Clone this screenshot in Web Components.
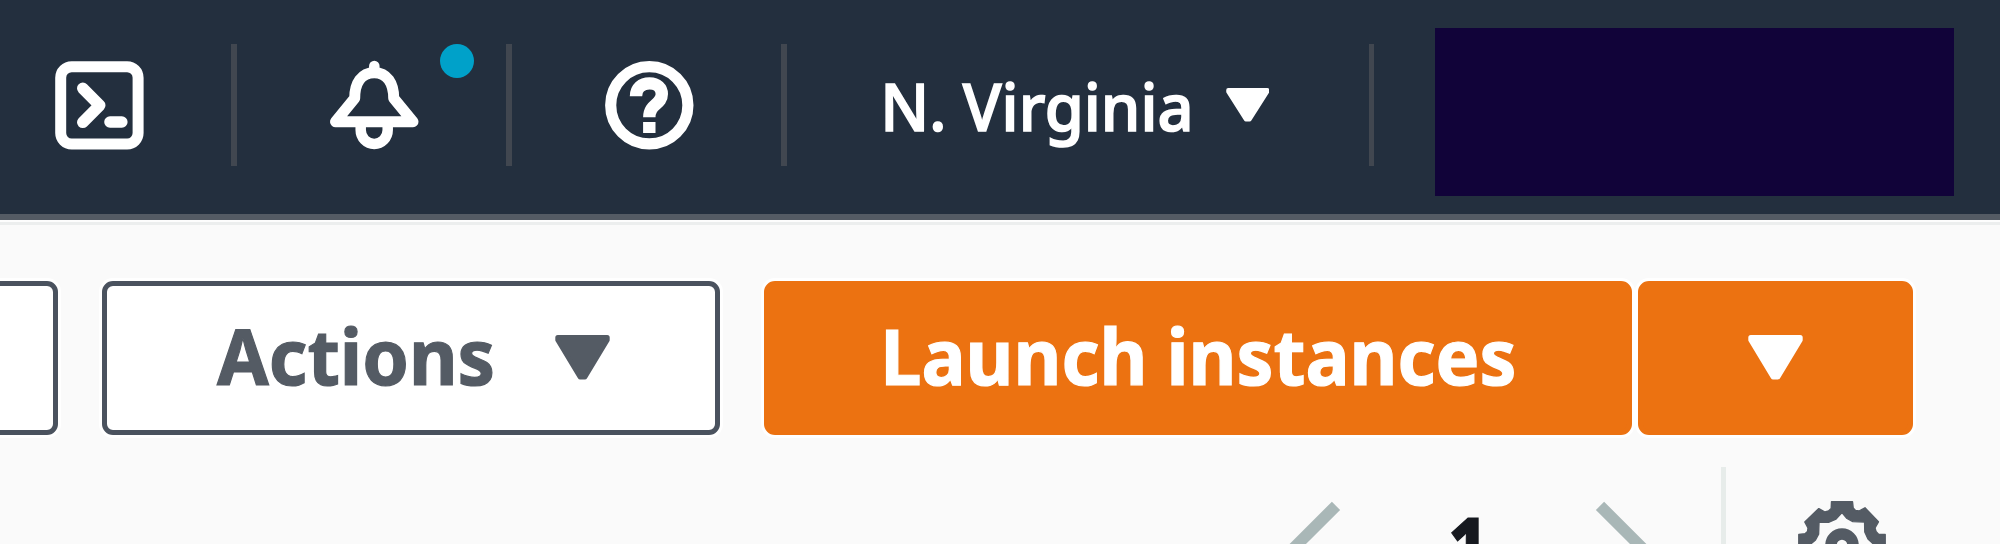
<!DOCTYPE html>
<html lang="en">
<head>
<meta charset="utf-8">
<title>Instances</title>
<style>
html, body { margin: 0; height: 100%; overflow: hidden; background: #fafafa; }
body { font-family: "Noto Sans", "Open Sans", sans-serif; }
</style>
</head>
<body>
<console-page></console-page>
<script>
const define = (name, html, setup) => customElements.define(name, class extends HTMLElement {
  constructor() { super(); this.attachShadow({ mode: 'open' }).innerHTML = html; }
  connectedCallback() { if (setup) setup(this, this.shadowRoot); }
});

// A label whose ink spans exactly the width given in the "width" attribute.
define('fit-text', `<style>
:host { display: block; white-space: nowrap; }
span { display: inline-block; transform-origin: 0 0; -webkit-text-stroke: var(--weight-boost, 1.2px) currentColor; }
</style><span></span>`, (el, root) => {
  const span = root.querySelector('span');
  span.textContent = el.getAttribute('label');
  const cs = getComputedStyle(el), w = +el.getAttribute('width');
  const ctx = document.createElement('canvas').getContext('2d');
  ctx.font = cs.fontWeight + ' ' + cs.fontSize + ' ' + cs.fontFamily;
  const m = ctx.measureText(span.textContent);
  const k = w / (m.actualBoundingBoxRight + m.actualBoundingBoxLeft);
  el.style.width = w + 'px';
  span.style.transform = 'scaleX(' + k + ') translateX(' + m.actualBoundingBoxLeft + 'px)';
});

const gearPath = () => {
  const outer = [[54.5,.8],[55.2,7],[57.5,9.5],[61,10],[67,6.8],[80.4,20.8],[77,27],[78,30.5],[80.5,33.2]];
  const inner = [[44,11.5],[49,17.5],[54.8,20.6],[66.6,21],[66.8,31],[70,38]];
  const ring = pts => {
    const out = [];
    for (let q = 0; q < 4; q++) for (const [x, y] of pts) {
      let a = x - 44, b = y - 44;
      for (let i = 0; i < q; i++) [a, b] = [-b, a];
      out.push((a + 44) + ' ' + (b + 44));
    }
    return 'M' + out.join('L') + 'Z';
  };
  return ring([...outer, [87.2,33.5]]) + ring(inner);
};

const line = 'fill="none" stroke="currentColor"';
const icons = {
  terminal: `<g ${line} stroke-width="11"><rect x="5.7" y="5.7" width="77.4" height="77.4" rx="11"/><path stroke-width="11.6" stroke-linecap="round" stroke-linejoin="round" d="M27.8 27.3 44.7 44.3 27.8 61.3M55 61H66.8"/></g>`,
  bell: `<g ${line} stroke-width="11" stroke-linejoin="round"><path d="M5.5 60.7H83L63.7 37.3C63.7 22 57 11.7 44.3 11.7S24.7 22 24.7 37.3Z"/><path stroke-width="10.5" stroke-linecap="round" d="M44.3 5V11"/><path stroke-width="10.5" d="M30.7 62V69a13.5 14 0 0 0 27 0V62"/></g>`,
  help: `<g ${line} stroke-width="11.2"><circle cx="44.3" cy="44.3" r="38.6"/><path stroke-width="12.4" d="M31 35.2C31 27 36.5 22.4 44.5 22.4S56.8 27 56.8 33C56.8 44 44.3 42.5 44.3 56.3M44.3 61V72"/></g>`,
  gear: `<path fill="currentColor" stroke="currentColor" stroke-width="1.4" stroke-linejoin="round" fill-rule="evenodd" d="${gearPath()}"/><circle ${line} stroke-width="11.5" cx="44" cy="44" r="11"/>`,
  prev: `<path ${line} stroke-width="11.6" d="M57 5.8 18.5 44.3 57 82.8"/>`,
  next: `<path ${line} stroke-width="11.6" d="M31 5.8 69.5 44.3 31 82.8"/>`
};
define('ui-icon', `<style>:host { display: block; flex: none; width: 89px; height: 89px; } svg { display: block; overflow: visible; }</style><svg width="89" height="89" viewBox="0 0 89 89"></svg>`,
  (el, root) => { root.querySelector('svg').innerHTML = icons[el.getAttribute('name')]; });

define('caret-down', `<style>:host { display: block; flex: none; width: 55px; height: 44.5px; } svg { display: block; width: 100%; height: 100%; }</style>
<svg viewBox="0 0 55 44.5" preserveAspectRatio="none"><path fill="currentColor" stroke="currentColor" stroke-width="5" stroke-linejoin="round" d="M2.8 2.5H52.2V5L29.9 42H25.1L2.8 5Z"/></svg>`);

define('nav-cell', `<style>
:host { display: flex; flex: none; align-items: center; box-sizing: border-box; width: 275px; height: 121.5px; padding-left: 93.3px; }
.content { display: flex; flex: 1; align-items: center; position: relative; }
.rule { width: 5.5px; height: 100%; background: #414750; }
</style><div class="content"><slot></slot></div><div class="rule"></div>`);

define('status-dot', `<style>
:host { display: block; position: absolute; left: 109.7px; top: -17px; width: 34px; height: 34px; border-radius: 50%; background: #00a1c9; }
</style>`);

define('top-bar', `<style>
:host { display: flex; align-items: center; box-sizing: border-box; height: 220px; padding-bottom: 4px; background: #232f3e; color: #fff; border-bottom: 6px solid #545b64; box-shadow: 0 2px 0 #fdfdfd, 0 5px 0 #eceeee; }
.first { width: 236.8px; padding-left: 55px; }
.region { width: 587.5px; padding-left: 99.6px; font-size: 66px; font-weight: 500; line-height: 90px; --weight-boost: 1.7px; }
.region fit-text { margin-top: -1px; }
.region caret-down { width: 43.5px; height: 33.5px; margin-left: 36.6px; }
.account { width: 519px; height: 167.5px; margin: 14px 0 0 61px; background: #110339; }
</style>
<nav-cell class="first"><ui-icon name="terminal"></ui-icon></nav-cell>
<nav-cell><ui-icon name="bell"></ui-icon><status-dot></status-dot></nav-cell>
<nav-cell><ui-icon name="help"></ui-icon></nav-cell>
<nav-cell class="region"><fit-text label="N. Virginia" width="303"></fit-text><caret-down></caret-down></nav-cell>
<div class="account"></div>`);

define('ui-button', `<style>
:host { display: flex; flex: none; align-items: center; box-sizing: border-box; height: 154px; border: 5px solid #4a525e; border-radius: 11px; background: #fff; color: #545b64; font-size: 77px; font-weight: 700; line-height: 104px; box-shadow: 0 0 0 3px #fff; }
:host([primary]) { background: #ec7211; border-color: #ec7211; color: #fff; }
</style><slot></slot>`);

define('action-bar', `<style>
:host { display: flex; margin-top: 60.5px; }
.cut { width: 80px; margin-left: -22px; }
.actions { width: 618px; margin-left: 44.3px; padding-left: 109.4px; }
.launch { width: 868.5px; margin-left: 43.7px; padding-left: 117.4px; }
.more { width: 275px; margin-left: 5.5px; padding-left: 104.7px; }
fit-text { margin-top: -3px; }
.actions caret-down { margin-left: 63px; }
</style>
<ui-button class="cut"></ui-button>
<ui-button class="actions"><fit-text label="Actions" width="275.6"></fit-text><caret-down></caret-down></ui-button>
<ui-button primary class="launch"><fit-text label="Launch instances" width="628"></fit-text></ui-button>
<ui-button primary class="more"><caret-down></caret-down></ui-button>`);

define('page-controls', `<style>
:host { display: flex; align-items: flex-start; justify-content: flex-end; margin: 32.8px 114.5px 0 0; height: 154px; color: #a9b7b7; }
ui-icon { margin-top: 33px; }
.page { margin: 24.5px 89.3px 0 83px; font-size: 76px; font-weight: 800; line-height: 104px; color: #16191f; }
.rule { width: 5.5px; height: 154px; margin: 0 71.5px 0 63px; background: #e7ecea; }
.gear { color: #545b64; width: 88px; margin-top: 33.5px; }
</style>
<ui-icon name="prev"></ui-icon>
<fit-text class="page" label="1" width="28"></fit-text>
<ui-icon name="next"></ui-icon>
<div class="rule"></div>
<ui-icon class="gear" name="gear"></ui-icon>`);

define('console-page', `<style>:host { display: block; height: 544px; overflow: hidden; background: #fafafa; }</style>
<top-bar></top-bar><action-bar></action-bar><page-controls></page-controls>`);
</script>
</body>
</html>
